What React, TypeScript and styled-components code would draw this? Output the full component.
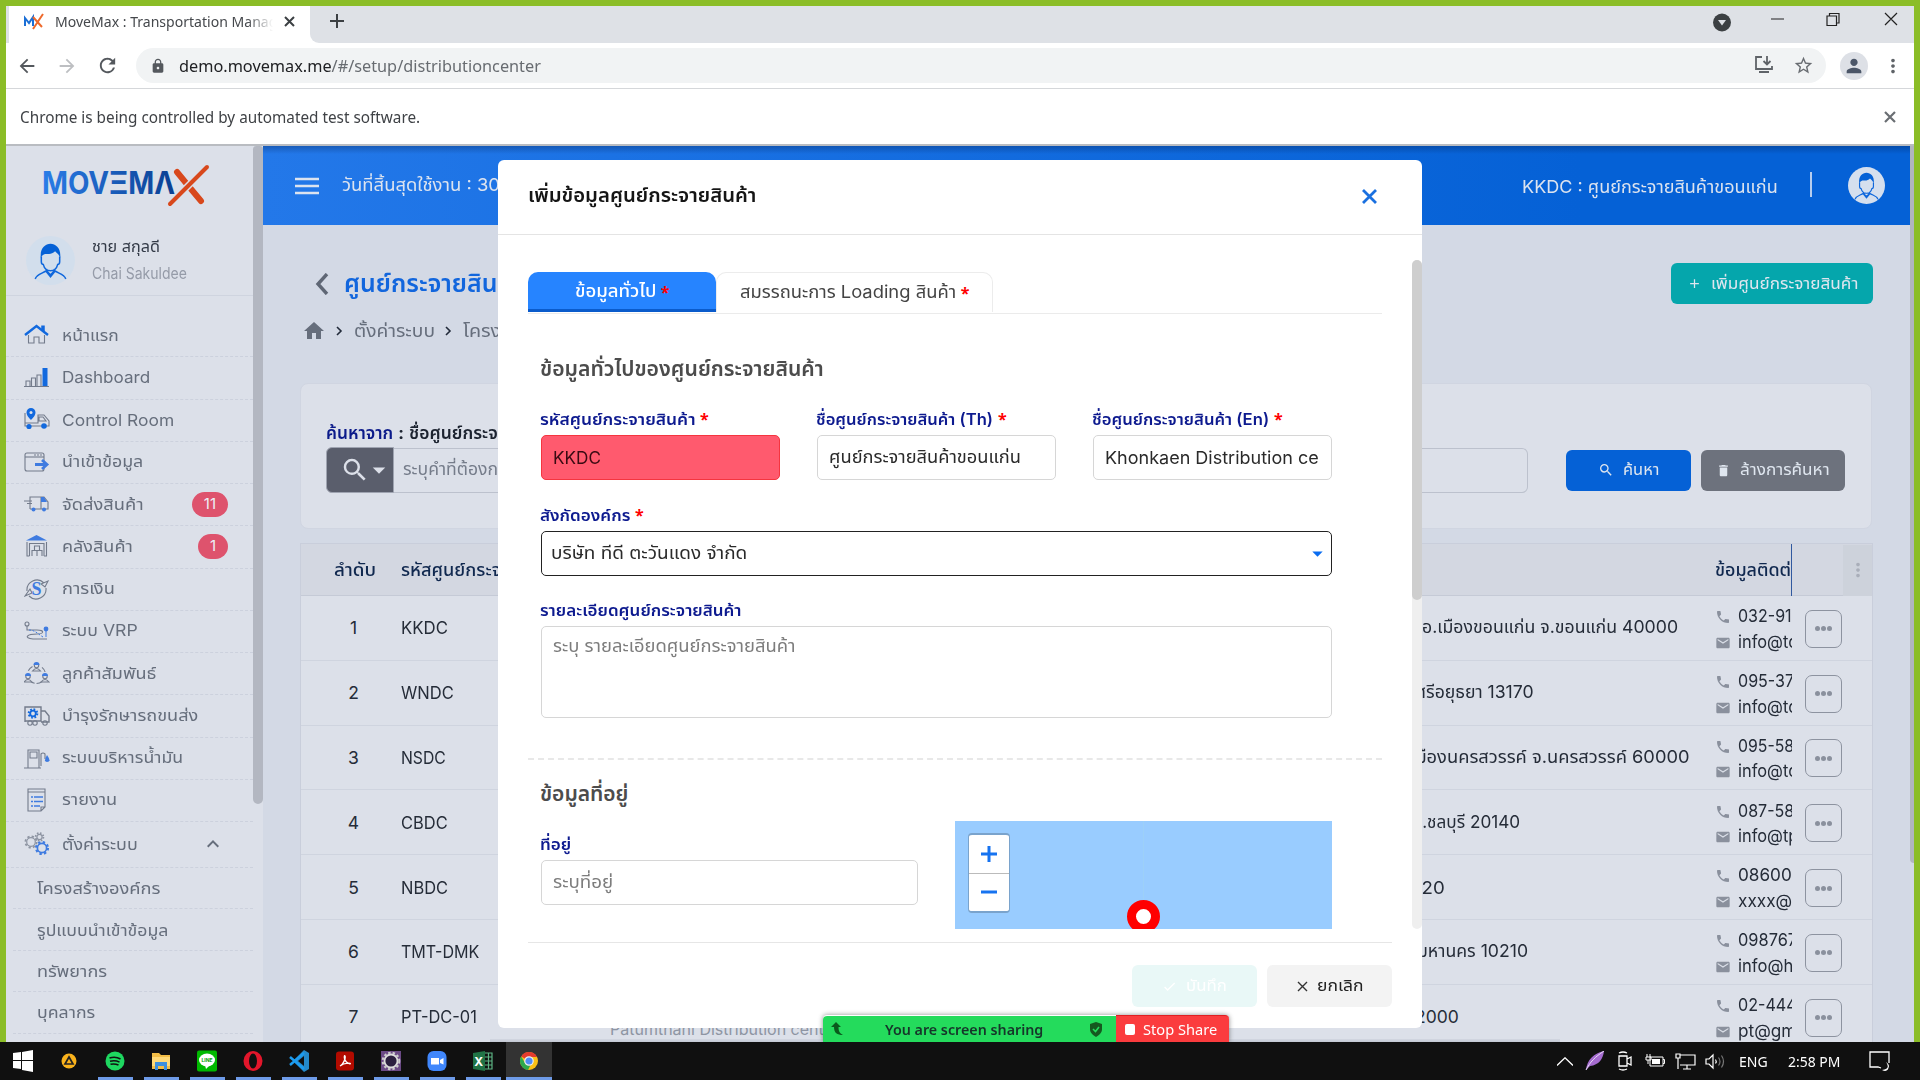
import React, { useLayoutEffect, useRef, useState } from 'react';
import styled, { createGlobalStyle, css } from 'styled-components';
import { MdSearch, MdHome, MdPhone, MdEmail, MdDelete, MdStarBorder, MdPerson, MdMoreVert, MdLock, MdRefresh, MdArrowBack, MdArrowForward, MdAdd, MdCheck, MdKeyboardArrowUp, MdArrowDropDown } from 'react-icons/md';

const thai = `Inter, "Noto Sans Thai", "Noto Sans", sans-serif`;
const ui = `"Noto Sans", "Open Sans", sans-serif`;

const Global = createGlobalStyle`
  * { box-sizing: border-box; }
  body { margin: 0; overflow: hidden; font-family: ${thai}; color: #222b3a; }
  svg { display: block; flex: none; }
`;

/* ---------- text that keeps a fixed measure ---------- */
const FitBox = styled.span`
  display: inline-block;
  white-space: nowrap;
  flex: none;
`;
const FitText = styled.span`
  display: inline-block;
  transform-origin: 0 50%;
`;
function Fit({ w, children }: { w: number; children: React.ReactNode }) {
  const ref = useRef<HTMLSpanElement>(null);
  const [scale, setScale] = useState(1);
  useLayoutEffect(() => {
    if (ref.current) setScale(w / ref.current.offsetWidth);
  }, [w]);
  return (
    <FitBox style={{ width: w }}>
      <FitText ref={ref} style={{ transform: `scaleX(${scale})` }}>{children}</FitText>
    </FitBox>
  );
}

/* ---------- window chrome ---------- */
const Desktop = styled.div`
  width: 1920px;
  height: 1080px;
  display: flex;
  flex-direction: column;
  overflow: hidden;
`;
const Window = styled.div`
  position: relative;
  height: 1042px;
  flex: none;
  display: flex;
  flex-direction: column;
  overflow: hidden;
  border: 6px solid #8bbd27;
  border-bottom: 0;
`;
const TabStrip = styled.div`
  display: flex;
  height: 37px;
  flex: none;
  background: #dee1e6;
  font: 15px ${ui};
  color: #45484c;
`;
const StripEdge = styled.div`
  width: 3px;
  background: #dee1e6;
`;
const BrowserTab = styled.div`
  display: flex;
  align-items: center;
  width: 301px;
  padding: 0 12px 7px 15px;
  background: #fff;
`;
const TabTitle = styled.div`
  width: 218px;
  margin: 0 11px 0 11px;
  overflow: hidden;
  -webkit-mask-image: linear-gradient(90deg, #000 88%, transparent);
`;
const StripRest = styled.div`
  flex: 1;
  display: flex;
  align-items: center;
  padding: 0 15px 7px 19px;
  background: #dee1e6;
  border-bottom-left-radius: 9px;
`;
const StripWrap = styled.div`
  flex: 1;
  display: flex;
  background: #fff;
`;
const WindowButtons = styled.div`
  margin-left: auto;
  display: flex;
  align-items: center;
`;
const Toolbar = styled.div`
  display: flex;
  align-items: center;
  height: 46px;
  flex: none;
  padding: 0 9px 0 10px;
  background: #fff;
  border-bottom: 1px solid #d5d7da;
  color: #5f6368;
`;
const NavIcon = styled.div<{ $dim?: boolean; $w?: number }>`
  width: ${(p) => p.$w ?? 40}px;
  display: flex;
  flex: none;
  color: ${(p) => (p.$dim ? '#bdbfc2' : '#54585d')};
`;
const UrlPill = styled.div`
  flex: none;
  width: 1690px;
  height: 35px;
  margin-right: 14px;
  border-radius: 18px;
  background: #f1f3f4;
  display: flex;
  align-items: center;
  padding: 0 12px 0 14px;
  font: 17px ${ui};
  color: #686c71;
  b { font-weight: 400; color: #202124; }
`;
const PillActions = styled.div`
  margin-left: auto;
  display: flex;
  gap: 19px;
`;
const Profile = styled.div`
  width: 28px;
  height: 28px;
  margin-right: 14px;
  border-radius: 50%;
  background: #dde0e6;
  color: #4b5668;
  display: grid;
  place-items: center;
`;
const InfoBar = styled.div`
  display: flex;
  align-items: center;
  justify-content: space-between;
  height: 57px;
  flex: none;
  padding: 0 18px 0 14px;
  background: #fff;
  border-bottom: 2px solid #b9bcc1;
  font: 15.5px ${ui};
  color: #3f4246;
`;

/* ---------- application ---------- */
const AppArea = styled.div`
  flex: 1;
  display: flex;
  min-height: 0;
  background: #d3d9e5;
`;
const Sidebar = styled.div`
  width: 257px;
  display: flex;
  background: #dce0e9;
  color: #666e7c;
  font-size: 16.5px;
`;
const SideContent = styled.div`
  width: 247px;
`;
const SideScroll = styled.div`
  width: 10px;
  height: 658px;
  background: #b3b7c1;
  border-radius: 4px 4px 6px 6px;
`;
const LogoBox = styled.div`
  height: 78px;
  padding: 17px 0 0 36px;
`;
const UserBox = styled.div`
  display: flex;
  align-items: center;
  height: 72px;
  padding: 1px 0 0 20px;
  border-bottom: 1px solid #cfd4df;
`;
const UserNames = styled.div`
  display: grid;
  margin-left: 17px;
  gap: 3px;
  font-size: 15.5px;
  line-height: 24px;
  color: #343b48;
`;
const Muted = styled.span`
  color: #959ba8;
`;
const Menu = styled.div`
  padding-top: 19px;
`;
const MenuItem = styled.div<{ $h: number }>`
  display: flex;
  align-items: center;
  height: ${(p) => p.$h}px;
  padding: 0 25px 1px 18px;
  border-bottom: 1px dashed #ccd1dd;
`;
const MenuIcon = styled.div`
  width: 38px;
`;
const Badge = styled.span`
  margin-left: auto;
  padding: 0 12px;
  height: 25px;
  line-height: 24px;
  border-radius: 13px;
  background: #de536d;
  color: #eceff6;
  font-size: 15px;
`;
const MenuChevron = styled.div`
  margin-left: auto;
  padding-right: 3px;
`;
const SubItem = styled.div`
  height: 41.4px;
  margin-left: 7px;
  padding: 1px 0 0 24px;
  display: flex;
  align-items: center;
  border-bottom: 1px dashed #ccd1dd;
`;
const Main = styled.div`
  width: 1647px;
  display: flex;
  flex-direction: column;
`;
const PageScroll = styled.div`
  width: 4px;
  height: 717px;
  background: #b1b5c0;
  border-radius: 0 0 0 4px;
`;
const TopBar = styled.div`
  display: flex;
  align-items: center;
  height: 79px;
  flex: none;
  padding: 0 25px 0 32px;
  background: linear-gradient(180deg, rgba(0, 20, 60, .28), transparent 8px), linear-gradient(90deg, #2378e9, #0561d6 80%);
  color: #dce3ef;
  font-size: 17.5px;
`;
const TopLabel = styled.div`
  margin-left: 23px;
`;
const TopRight = styled.div`
  display: flex;
  align-items: center;
  margin-left: auto;
`;
const CenterName = styled.div`
  padding-top: 4px;
`;
const TopRule = styled.div`
  width: 2px;
  height: 25px;
  margin: 0 36px 2px 32px;
  background: #b6cdee;
`;
const PageHead = styled.div`
  display: flex;
  flex: none;
  justify-content: space-between;
  height: 158px;
  padding: 38px 37px 0 39px;
`;
const TitleRow = styled.div`
  display: flex;
  align-items: center;
  height: 42px;
  gap: 15px;
  padding-left: 13px;
  color: #1266dd;
  font-size: 25px;
  font-weight: 600;
`;
const Crumbs = styled.div`
  display: flex;
  align-items: center;
  height: 52px;
  font-size: 17.5px;
  color: #666e7c;
`;
const CrumbArrow = styled.div`
  width: 7px;
  margin: 0 11px 0 10px;
`;
const Button = styled.div<{ $bg: string; $fg?: string; $w: number; $h?: number }>`
  display: flex;
  align-items: center;
  justify-content: center;
  gap: 9px;
  width: ${(p) => p.$w}px;
  height: ${(p) => p.$h ?? 41}px;
  border-radius: 6px;
  background: ${(p) => p.$bg};
  color: ${(p) => p.$fg ?? '#dfe6ef'};
  font-size: 16px;
`;
const SearchCard = styled.div`
  flex: none;
  height: 146px;
  margin: 0 38px 0 37px;
  padding: 35px 26px 0 25px;
  background: #dce0e9;
  border: 1px solid #d0d5e1;
  border-radius: 8px;
`;
const SearchLabel = styled.div`
  display: flex;
  height: 28px;
  line-height: 28px;
  font-size: 17px;
  font-weight: 600;
  color: #1c2330;
  b { color: #0b1a8a; font-weight: 600; }
`;
const SearchRow = styled.div`
  display: flex;
  align-items: center;
`;
const SearchKind = styled.div`
  width: 68px;
  height: 46px;
  display: flex;
  align-items: center;
  padding-left: 13px;
  background: #5a5e6c;
  border: 1px solid #9fa4b1;
  border-radius: 6px 0 0 6px;
  color: #dce0e9;
  svg + svg { margin-left: -6px; }
`;
const SearchInput = styled.div`
  width: 1135px;
  height: 45px;
  margin-right: 38px;
  padding-left: 9px;
  display: flex;
  align-items: center;
  border: 1px solid #bcc1cd;
  border-left: 0;
  border-radius: 0 6px 6px 0;
  color: #757c8a;
  font-size: 17px;
`;
const ClearSlot = styled.div`
  margin-left: 10px;
`;
const Table = styled.div`
  flex: none;
  height: 520px;
  margin: 14px 37px 0 37px;
  border: 1px solid #c9cedb;
  background: #dce0e9;
`;
const rowGrid = css`
  display: grid;
  grid-template-columns: 100px 1021px 293px 77px 80px;
`;
const HeadRow = styled.div`
  ${rowGrid}
  height: 52px;
  align-items: center;
  background: #d3d7e1;
  border-bottom: 1px solid #c5cad6;
  color: #10284f;
  font-size: 17.5px;
  font-weight: 500;
`;
const Row = styled.div`
  ${rowGrid}
  height: 64.8px;
  align-items: center;
  border-bottom: 1px solid #cfd4df;
  font-size: 17.5px;
  color: #252c38;
`;
const NumCell = styled.div`
  text-align: center;
  padding-left: 5px;
`;
const Cell = styled.div`
  display: flex;
  gap: 209px;
  white-space: nowrap;
`;
const SubNameSlot = styled.div`
  margin-left: -76px;
`;
const SubName = styled.div`
  width: 0;
  height: 0;
  padding-top: 13px;
  color: #8e95a3;
  font-size: 16px;
`;
const Address = styled.div<{ $pull: number }>`
  margin-left: -${(p) => p.$pull}px;
`;
const Contact = styled.div`
  overflow: hidden;
  align-self: stretch;
  padding-top: 7px;
`;
const ContactLine = styled.div`
  display: flex;
  align-items: center;
  gap: 7px;
  height: 25.5px;
  color: #252c38;
  svg { color: #8a909d; margin-top: 3px; }
`;
const HeadContact = styled.div`
  height: 52px;
  line-height: 52px;
  overflow: hidden;
  border-right: 1px solid #31599f;
`;
const HeadMenu = styled.div`
  width: 29px;
  height: 51px;
  margin-left: auto;
  display: grid;
  place-items: center;
  background: #cdd2db;
  color: #a9aeb9;
`;
const MoreButton = styled.div`
  width: 37px;
  height: 38px;
  margin: 2px 0 0 13px;
  border: 1px solid #8d93a0;
  border-radius: 7px;
  display: flex;
  align-items: center;
  justify-content: center;
  gap: 1px;
  i { width: 5px; height: 5px; border-radius: 50%; background: #8a909d; }
`;

/* ---------- modal ---------- */
const Modal = styled.div`
  position: absolute;
  left: 492px;
  top: 154px;
  width: 924px;
  height: 868px;
  border-radius: 6px;
  background: #fff;
  color: #222;
`;
const ModalHead = styled.div`
  display: flex;
  align-items: center;
  justify-content: space-between;
  height: 75px;
  padding: 0 45px 2px 30px;
  border-bottom: 1px solid #e4e4e4;
  font-size: 20px;
  font-weight: 600;
  color: #151515;
`;
const ModalBody = styled.div`
  display: flex;
  justify-content: space-between;
  height: 694px;
  padding-top: 25px;
  overflow: hidden;
`;
const Form = styled.div`
  width: 854px;
  margin-left: 30px;
  padding-top: 12px;
`;
const ModalScroll = styled.div`
  width: 10px;
  height: 669px;
  background: #efefef;
  border-radius: 5px;
`;
const ModalThumb = styled.div`
  height: 340px;
  background: #cecece;
  border-radius: 5px;
`;
const Tabs = styled.div`
  display: flex;
  height: 42px;
  border-bottom: 1px solid #ebebeb;
`;
const FormTab = styled.div<{ $active?: boolean }>`
  display: flex;
  align-items: center;
  justify-content: center;
  height: 40px;
  width: ${(p) => (p.$active ? 188 : 277)}px;
  border-radius: 10px 10px 0 0;
  font-size: 17px;
  ${(p) =>
    p.$active
      ? css`padding-top: 3px; background: #2684ff; color: #fff; border-bottom: 3px solid #0a5bcb; font-weight: 500;`
      : css`border: 1px solid #ececec; border-bottom: 0; color: #444;`}
`;
const Star = styled.span`
  margin-left: 5px;
  color: #f00;
  font-size: 16px;
  font-weight: 700;
  font-family: ${ui};
`;
const Section = styled.div<{ $top: number }>`
  display: flex;
  align-items: center;
  height: 32px;
  margin: ${(p) => p.$top}px 0 0 12px;
  font-size: 21px;
  font-weight: 600;
  color: #4c4c4c;
`;
const Fields = styled.div<{ $top: number }>`
  display: flex;
  gap: 37px;
  margin: ${(p) => p.$top}px 0 0 13px;
`;
const Field = styled.div<{ $w: number }>`
  width: ${(p) => p.$w}px;
`;
const Label = styled.div`
  display: flex;
  align-items: center;
  height: 30px;
  margin: 0 0 1px -1px;
  font-size: 16.5px;
  font-weight: 600;
  color: #0d1a8f;
`;
const Input = styled.div<{ $bad?: boolean; $focus?: boolean; $tall?: boolean }>`
  display: flex;
  align-items: ${(p) => (p.$tall ? 'flex-start' : 'center')};
  justify-content: space-between;
  height: ${(p) => (p.$tall ? 92 : 45)}px;
  padding: ${(p) => (p.$tall ? '6px 0 0 11px' : p.$focus ? '0 1px 0 9px' : '0 0 0 11px')};
  border: 1px solid ${(p) => (p.$bad ? '#f5353f' : p.$focus ? '#222' : '#d6d6d6')};
  border-radius: 5px;
  background: ${(p) => (p.$bad ? '#ff5a6e' : '#fff')};
  font-size: 17.5px;
  color: ${(p) => (p.$bad ? '#3a0a12' : '#2a2a2a')};
`;
const Hint = styled.span`
  color: #7d7d7d;
`;
const Divider = styled.div`
  margin-top: 40px;
  border-top: 2px dashed #e8e8e8;
`;
const MapView = styled.div`
  position: relative;
  flex: none;
  width: 377px;
  height: 190px;
  margin-top: -8px;
  background: linear-gradient(90deg, transparent 188px, #9dd0f8 188px, #9dd0f8 189px, transparent 189px), #99ccff;
`;
const ZoomBox = styled.div`
  position: absolute;
  left: 13px;
  top: 12px;
  width: 42px;
  height: 80px;
  display: flex;
  flex-direction: column;
  border: 2px solid #7aa3cc;
  border-width: 2px 1.5px;
  border-radius: 4px;
  background: #fff;
`;
const ZoomKey = styled.div`
  flex: 1;
  display: grid;
  place-items: center;
  & + & { border-top: 1px solid #bbb; }
`;
const Marker = styled.div`
  position: absolute;
  left: 172px;
  top: 79px;
  width: 33px;
  height: 33px;
  border: 9px solid #f00;
  border-radius: 50%;
  background: #fff;
`;
const ModalFoot = styled.div`
  display: flex;
  justify-content: flex-end;
  gap: 10px;
  margin: 13px 30px 0;
  padding-top: 22px;
  border-top: 1px solid #e6e6e6;
`;
const TableScroll = styled.div`
  position: absolute;
  left: 484px;
  bottom: 0;
  width: 1070px;
  height: 3px;
  background: linear-gradient(180deg, #d3d7e1, #c3c8d3);
`;

/* ---------- screen share ---------- */
const Share = styled.div`
  position: absolute;
  left: 817px;
  bottom: 0;
  display: flex;
  align-items: flex-end;
  font: 600 15px ${ui};
  color: #16352a;
  box-shadow: 0 0 5px rgba(0, 0, 0, .45);
  border-radius: 4px 4px 0 0;
`;
const ShareInfo = styled.div`
  display: flex;
  align-items: center;
  width: 293px;
  height: 26px;
  padding-left: 7px;
  background: #24db5c;
  border-radius: 4px 0 0 0;
`;
const ShareText = styled.div`
  margin: 0 46px 0 41px;
`;
const StopShare = styled.div`
  display: flex;
  align-items: center;
  gap: 8px;
  width: 113px;
  height: 27px;
  padding-left: 9px;
  background: #fb3c3e;
  border-top: 1px solid #e01f22;
  border-radius: 0 4px 0 0;
  color: #fff;
  font-weight: 400;
  i { width: 10px; height: 11px; border-radius: 2px; background: #fff; }
`;

/* ---------- taskbar ---------- */
const Taskbar = styled.div`
  display: flex;
  height: 38px;
  background: #101010;
  color: #fff;
  font: 15px ${ui};
`;
const TaskApp = styled.div<{ $open?: boolean; $active?: boolean; $w: number }>`
  width: ${(p) => p.$w}px;
  display: grid;
  place-items: center;
  background: ${(p) =>
    p.$open
      ? `linear-gradient(#6e9be8,#6e9be8) center bottom / ${p.$active ? 46 : 35}px 3px no-repeat ${p.$active ? '#333' : '#101010'}`
      : 'transparent'};
`;
const Tray = styled.div`
  margin-left: auto;
  display: flex;
  align-items: center;
  padding-right: 14px;
`;
const TrayItem = styled.div<{ $w: number }>`
  width: ${(p) => p.$w}px;
  display: flex;
  justify-content: center;
`;

/* ---------- drawings ---------- */
const g = { fill: 'none', stroke: '#737b8b', strokeWidth: 1.1 } as const;
const B = '#1269de';
const L = '#3f7be0';
const Gear = ({ x, y, r, c, w = 1.2 }: { x: number; y: number; r: number; c: string; w?: number }) => (
  <g fill="none" stroke={c} strokeWidth={w}>
    <circle cx={x} cy={y} r={r} />
    <circle cx={x} cy={y} r={r + 1.3} strokeWidth={w + 0.6} strokeDasharray={`${(r + 1.3) * 0.4} ${(r + 1.3) * 0.385}`} />
  </g>
);
const icons: Record<string, React.ReactNode> = {
  home: <><path {...g} d="M4.500 12v8h5.500v-6h5v6h5.500v-8" /><path d="M1 12 12.500 3 24 12" fill="none" stroke={B} strokeWidth="2.400" /><path d="M19 8V2.500" fill="none" stroke={B} strokeWidth="3.500" /></>,
  bars: <><path {...g} d="M0 21.500h25M2 21v-5h4v5M7.500 21v-8h4v8M13 21V10h4v11" /><path fill={B} d="M18.500 3h5v18h-5z" /></>,
  control: <><path {...g} d="M1 5v13h24v-5l-5-6h-6v8H1M15 9h4l3 4h-7z" /><path fill={B} d="M7 0a4.500 4.500 0 0 1 4.500 4.500C11.500 8 7 12 7 12S2.500 8 2.500 4.500A4.500 4.500 0 0 1 7 0z" /><circle cx="7" cy="4.500" r="1.500" fill="#dce0e9" /><circle cx="5" cy="18.500" r="2.600" fill={B} /><circle cx="20" cy="18" r="2.800" fill={B} /></>,
  import: <><rect {...g} x="1" y="3" width="19" height="18" rx="2" /><path {...g} d="M1 7h19" /><path {...g} strokeDasharray="2 1" d="M10 5h9" /><path d="M11 14.500h11M18 10l5 4.500-5 4.500" fill="none" stroke={L} strokeWidth="2.800" /></>,
  deliver: <><path {...g} d="M6 17V5h11v12M0 9h8M3 11.500h5M17 5h3l4 5v7H6" /><path d="M17 5h3l3 5h-6z" fill={L} /><circle cx="9.500" cy="17.500" r="2" fill={L} /><circle cx="20" cy="17.500" r="2" fill={L} /></>,
  store: <><path {...g} d="M3 8v14M5.500 9v13M20 9v13M22.500 8v14M5.500 9.500h15M8 22v-5.500h10V22M13 16.500V22M10.500 12v4.500h5V12zM2.500 22h3M20 22h3" /><path fill={L} d="M12.500 1 23 6.500H2z" /></>,
  money: <><path {...g} d="M3 14A10 10 0 0 1 20 6M22 11A10 10 0 0 1 5 19M17 7l7-3-3 6zM1 19l7-3-2-4z" /><text x="12.500" y="17.500" textAnchor="middle" fontFamily="Liberation Serif" fontWeight="700" fontSize="18" fill={L}>S</text></>,
  route: <><circle {...g} cx="3" cy="5" r="2" /><path {...g} d="M3 7v4h10c8 0 7 4 0 4-10 0-14 4-4 5h14" /><path d="M5 11c6 0 9 4 14 7" fill="none" stroke={L} strokeDasharray="2 1.500" /><circle cx="22" cy="10" r="2.400" fill={L} /><path d="M22 12v6" stroke={L} /></>,
  people: <><circle {...g} cx="12.500" cy="13.500" r="9" strokeDasharray="6 2" /><g fill="#dce0e9"><path d="M9 0h8v9H9zM0 11h8v10H0zM17 11h8v10h-8z" /></g><path {...g} d="M8.500 10q4-5 8 0zM0 21q4-5 8 0zM17 21q4-5 8 0z" /><g {...g}><circle cx="12.500" cy="4.500" r="2.200" /><circle cx="4" cy="15.500" r="2.200" /><circle cx="21" cy="15.500" r="2.200" /></g><g fill={L}><path d="M9.500 4a3 3 0 0 1 6 0zM1 15a3 3 0 0 1 6 0zM18 15a3 3 0 0 1 6 0z" /></g></>,
  service: <><path {...g} strokeWidth="1.400" d="M1 19V4h16v14H1M17 8h4l4 5v6h-8" /><circle {...g} cx="6" cy="20" r="2.200" /><circle {...g} cx="11" cy="20" r="2.200" /><circle {...g} cx="21" cy="20" r="2.200" /><Gear x={9} y={10.500} r={2.800} c={B} w={1.800} /></>,
  fuel: <><path {...g} d="M4 22V4h11v18M0 22h17M6 6h7v6H6zM17 20V8q2-2 4 0v5" /><path fill={L} d="M23 9q5 7 0 7-4 0 0-7z" /></>,
  report: <><path {...g} d="M4 1h17v18l-4 4H4zM4 4h17M17 23v-4h4" /><path d="M7 9h2M10 9h9M7 13.500h2M10 13.500h9M7 18h2M10 18h6" stroke={L} strokeWidth="1.700" /></>,
  gears: <><Gear x={7} y={10} r={4.300} c="#8d94a2" /><Gear x={15.500} y={5} r={2.600} c="#8d94a2" /><Gear x={18} y={16} r={4.600} c={L} w={1.700} /></>,
};
const Person = ({ size, bg }: { size: number; bg: string }) => (
  <svg width={size} height={size} viewBox="0 0 48 48">
    <circle cx="24" cy="24" r="24" fill={bg} />
    <path d="M15 20v5c0 3 2 3 2 3 2 8 12 8 14 0 0 0 2 0 2-3v-5M9 42c2-5 7-5 11-8l4 4 4-4c4 3 9 3 11 8M20 32v3l4 5 4-5v-3" fill="none" stroke="#0f67dc" strokeWidth="1.500" />
    <path d="M14.500 21c-2-18 21-18 19 0-1.500-3-3-4-5-6-4 4-8 2-11 3-2 1-2 2-3 3z" fill="#0561d6" />
  </svg>
);
const Cross = ({ s, c, w }: { s: number; c: string; w: number }) => (
  <svg width={s} height={s} viewBox={`0 0 ${s} ${s}`}><path d={`M1 1 ${s - 1} ${s - 1}M${s - 1} 1 1 ${s - 1}`} stroke={c} strokeWidth={w} fill="none" /></svg>
);
const Logo = () => (
  <svg width="172" height="46" viewBox="0 0 172 46">
    <defs><linearGradient id="lg" gradientUnits="userSpaceOnUse" x1="0" x2="134"><stop offset="0" stopColor="#2a7de8" /><stop offset="1" stopColor="#0a3f91" /></linearGradient></defs>
    <text x="0" y="31" fontFamily="Inter" fontWeight="700" fontSize="31" fill="url(#lg)" textLength="133" lengthAdjust="spacingAndGlyphs">MOVΞMΛ</text>
    <path d="M135 9l9 11 15 18" stroke="#d8481c" strokeWidth="6" strokeLinecap="round" fill="none" />
    <path d="M165 4 128 41" stroke="#dce0e9" strokeWidth="7" />
    <path d="M165 4 128 41" stroke="#d8481c" strokeWidth="4" strokeLinecap="round" />
  </svg>
);
const CrumbMark = () => (
  <CrumbArrow><svg width="7" height="10" viewBox="0 0 7 10"><path d="M1 1l4 4-4 4" fill="none" stroke="#222b3a" strokeWidth="1.600" /></svg></CrumbArrow>
);
const apps: { open?: boolean; active?: boolean; art: React.ReactNode }[] = [
  { art: <path fill="#fff" d="M2 4l8-1v8H2zM11 3l11-2v10H11zM2 12h8v8l-8-1zM11 12h11v11l-11-2z" /> },
  { art: <><circle cx="12" cy="12" r="7.500" fill="#f9b21c" /><path d="M12 8l4 7H8z" fill="none" stroke="#222" strokeWidth="1.700" /></> },
  { open: true, art: <><circle cx="12" cy="12" r="9.500" fill="#1ed760" /><path d="M6.500 9q6-2 11 1M7 12.300q5-1.500 9.500.8M7.500 15.300q4-1 8 .7" stroke="#111" strokeWidth="1.600" fill="none" /></> },
  { open: true, art: <><path fill="#f3bd46" d="M3 4h7l2 2h9v14H3z" /><path fill="#ffd978" d="M3 8h18v9H3z" /><path fill="#3d8fde" d="M6 21v-8h12v8h-3v-4H9v4z" /></> },
  { open: true, art: <><rect x="2" y="1.500" width="20" height="21" rx="2" fill="#00b900" /><ellipse cx="12" cy="11" rx="8" ry="6.500" fill="#fff" /><path fill="#fff" d="M10 16h5l-4 4z" /><text x="12" y="13" fontSize="5" fontWeight="700" textAnchor="middle" fill="#00a000" fontFamily="Inter">LINE</text></> },
  { open: true, art: <><ellipse cx="12" cy="12" rx="9.500" ry="10" fill="#e3162b" /><ellipse cx="12" cy="12" rx="4" ry="7.500" fill="#101010" /></> },
  { open: true, art: <><path fill="#2489ca" d="M17 1l5 3v16l-5 3L6 12z" /><path fill="#101010" d="M17 7v10l-6-5z" /><path d="M3 8l14 12M3 16 17 4" stroke="#1c9cf0" strokeWidth="2.500" /></> },
  { open: true, art: <><rect x="3" y="2.500" width="18" height="19" rx="3" fill="#b30b00" /><path d="M7 17c3-1 6-8 5-10s-2 6 5 8c2-1-5-2-10 2" fill="none" stroke="#fff" strokeWidth="1.300" /></> },
  { open: true, art: <><rect x="2" y="2" width="20" height="20" fill="#6b4a86" /><circle cx="12" cy="12" r="6.500" fill="#2c2040" stroke="#ddd" strokeWidth="1.800" /><circle cx="12" cy="12" r="8.300" fill="none" stroke="#ccc" strokeWidth="2" strokeDasharray="2.500 2" /></> },
  { open: true, art: <><rect x="2.500" y="2" width="19" height="20" rx="6" fill="#4087fc" /><path fill="#fff" d="M6 9h8v6.500H6zM15 11l3.500-2v6.500L15 14z" /></> },
  { open: true, art: <><path fill="#217346" d="M2 4l12-2v20L2 20z" /><path d="M14 4h7v16h-7M14 8h7M14 12h7M14 16h7M17.500 4v16" stroke="#5db383" strokeWidth="1.200" fill="none" /><text x="7.800" y="16.500" fontSize="12" fontWeight="700" textAnchor="middle" fill="#fff" fontFamily="Inter">X</text></> },
  { open: true, active: true, art: <><circle cx="12" cy="12" r="9" fill="#fbc116" /><path fill="#e33b2e" d="M12 12 4.200 7.500A9 9 0 0 1 20 8h-8z" /><path fill="#2da94f" d="M12 12l2 3-3 6A9 9 0 0 1 4.200 7.500L8 14z" /><circle cx="12" cy="12" r="4.200" fill="#4f8df5" stroke="#eee" strokeWidth="1.200" /></> },
];

const menu: { k: string; t: string; w: number; h?: number; badge?: string }[] = [
  { k: 'home', t: 'หน้าแรก', w: 57 },
  { k: 'bars', t: 'Dashboard', w: 88 },
  { k: 'control', t: 'Control Room', w: 112 },
  { k: 'import', t: 'นำเข้าข้อมูล', w: 81 },
  { k: 'deliver', t: 'จัดส่งสินค้า', w: 82, badge: '11' },
  { k: 'store', t: 'คลังสินค้า', w: 71, badge: '1' },
  { k: 'money', t: 'การเงิน', w: 53 },
  { k: 'route', t: 'ระบบ VRP', w: 76 },
  { k: 'people', t: 'ลูกค้าสัมพันธ์', w: 94 },
  { k: 'service', t: 'บำรุงรักษารถขนส่ง', w: 136 },
  { k: 'fuel', t: 'ระบบบริหารน้ำมัน', w: 121 },
  { k: 'report', t: 'รายงาน', w: 55 },
  { k: 'gears', t: 'ตั้งค่าระบบ', w: 76, h: 46 },
];
const subs: [string, number][] = [['โครงสร้างองค์กร', 123], ['รูปแบบนำเข้าข้อมูล', 131], ['ทรัพยากร', 70], ['บุคลากร', 58]];
const rows: { c: string; cw: number; a: string; aw: number; pull: number; p: string; pw: number; m: string; mw: number }[] = [
  { c: 'KKDC', cw: 47, a: 'อ.เมืองขอนแก่น จ.ขอนแก่น 40000', aw: 256, pull: 0, p: '032-91', pw: 54, m: 'info@td', mw: 60 },
  { c: 'WNDC', cw: 53, a: 'ศรีอยุธยา 13170', aw: 119, pull: 7, p: '095-37', pw: 56, m: 'info@td', mw: 60 },
  { c: 'NSDC', cw: 45, a: 'เมืองนครสวรรค์ จ.นครสวรรค์ 60000', aw: 279, pull: 12, p: '095-58', pw: 56, m: 'info@td', mw: 60 },
  { c: 'CBDC', cw: 47, a: 'จ.ชลบุรี 20140', aw: 107, pull: 9, p: '087-58', pw: 56, m: 'info@tp', mw: 60 },
  { c: 'NBDC', cw: 47, a: '120', aw: 31, pull: 8, p: '08600', pw: 54, m: 'xxxx@', mw: 54 },
  { c: 'TMT-DMK', cw: 78, a: 'มหานคร 10210', aw: 111, pull: 5, p: '098767', pw: 59, m: 'info@h', mw: 55 },
  { c: 'PT-DC-01', cw: 76, a: '12000', aw: 51, pull: 14, p: '02-444', pw: 59, m: 'pt@gm', mw: 58 },
];

export default function App() {
  return (
    <Desktop>
      <Global />
      <Window>
        <TabStrip>
          <StripEdge />
          <BrowserTab>
            <svg width="20" height="17" viewBox="0 0 20 17"><path d="M1 13V5l4 5 4-6v9" stroke="#1b6fd6" strokeWidth="2" fill="none" /><path d="M9 4l9 10M19 1 9 16" stroke="#ee6a2c" strokeWidth="2" /></svg>
            <TabTitle><Fit w={222}>MoveMax : Transportation Manag</Fit></TabTitle>
            <Cross s={11} c="#3c4043" w={2} />
          </BrowserTab>
          <StripWrap>
            <StripRest>
              <svg width="16" height="16" viewBox="0 0 16 16"><path d="M8 1v14M1 8h14" stroke="#3c4043" strokeWidth="2" /></svg>
              <WindowButtons>
                <svg width="190" height="24" viewBox="0 0 190 24">
                  <circle cx="13" cy="13.500" r="9" fill="#3c4043" /><path d="M9 11h8l-4 5.500z" fill="#dee1e6" />
                  <g fill="none" stroke="#222" strokeWidth="1.200"><path d="M62 10h13M118 7h9.500v9.500H118zM120.500 6.500V4.500H130V14h-2M176 4l12 12M188 4l-12 12" /></g>
                </svg>
              </WindowButtons>
            </StripRest>
          </StripWrap>
        </TabStrip>
        <Toolbar>
          <NavIcon><MdArrowBack size={22} /></NavIcon>
          <NavIcon $dim><MdArrowForward size={22} /></NavIcon>
          <NavIcon><MdRefresh size={23} /></NavIcon>
          <UrlPill>
            <NavIcon $w={29}><MdLock size={16} /></NavIcon>
            <Fit w={362}><b>demo.movemax.me</b>/#/setup/distributioncenter</Fit>
            <PillActions>
              <svg width="20" height="20" viewBox="0 0 20 20"><path d="M8 2H2v12h16v-3" fill="none" stroke="#5f6368" strokeWidth="1.800" /><path d="M5 16h10v2H5z" fill="#5f6368" /><path d="M13 1v8M9.500 6l3.500 3.500L16.500 6" fill="none" stroke="#5f6368" strokeWidth="1.800" /></svg>
              <MdStarBorder size={21} />
            </PillActions>
          </UrlPill>
          <Profile><MdPerson size={22} /></Profile>
          <MdMoreVert size={22} />
        </Toolbar>
        <InfoBar>
          <Fit w={400}>Chrome is being controlled by automated test software.</Fit>
          <Cross s={12} c="#6a6e73" w={2.200} />
        </InfoBar>
        <AppArea>
          <Sidebar>
            <SideContent>
              <LogoBox><Logo /></LogoBox>
              <UserBox>
                <Person size={49} bg="#d2deec" />
                <UserNames>
                  <Fit w={68}>ชาย สกุลดี</Fit>
                  <Muted><Fit w={95}>Chai Sakuldee</Fit></Muted>
                </UserNames>
              </UserBox>
              <Menu>
                {menu.map((m) => (
                  <MenuItem key={m.k} $h={m.h ?? 42.25}>
                    <MenuIcon><svg width="26" height="24" viewBox="0 0 26 24">{icons[m.k]}</svg></MenuIcon>
                    <Fit w={m.w}>{m.t}</Fit>
                    {m.badge && <Badge>{m.badge}</Badge>}
                    {m.k === 'gears' && <MenuChevron><MdKeyboardArrowUp size={24} /></MenuChevron>}
                  </MenuItem>
                ))}
                {subs.map(([t, w]) => <SubItem key={t}><Fit w={w}>{t}</Fit></SubItem>)}
              </Menu>
            </SideContent>
            <SideScroll />
          </Sidebar>
          <Main>
            <TopBar>
              <svg width="24" height="18" viewBox="0 0 24 18"><path d="M0 2h24M0 9h24M0 16h24" stroke="#dce3ef" strokeWidth="2.600" /></svg>
              <TopLabel><Fit w={158}>วันที่สิ้นสุดใช้งาน : 30</Fit></TopLabel>
              <TopRight>
                <CenterName><Fit w={256}>KKDC : ศูนย์กระจายสินค้าขอนแก่น</Fit></CenterName>
                <TopRule />
                <Person size={37} bg="#d5dfee" />
              </TopRight>
            </TopBar>
            <PageHead>
              <div>
                <TitleRow>
                  <svg width="14" height="22" viewBox="0 0 14 22"><path d="M12 1 3 11l9 10" fill="none" stroke="#5f6775" strokeWidth="3.400" /></svg>
                  <Fit w={180}>ศูนย์กระจายสินค้า</Fit>
                </TitleRow>
                <Crumbs>
                  <MdHome size={24} />
                  <CrumbMark />
                  <Fit w={81}>ตั้งค่าระบบ</Fit>
                  <CrumbMark />
                  <Fit w={133}>โครงสร้างองค์กร</Fit>
                </Crumbs>
              </div>
              <Button $bg="#05a6ac" $w={202}><MdAdd size={15} /><Fit w={147}>เพิ่มศูนย์กระจายสินค้า</Fit></Button>
            </PageHead>
            <SearchCard>
              <SearchLabel><b><Fit w={67}>ค้นหาจาก</Fit></b><Fit w={16}>&nbsp;:&nbsp;</Fit><Fit w={147}>ชื่อศูนย์กระจายสินค้า</Fit></SearchLabel>
              <SearchRow>
                <SearchKind><MdSearch size={30} /><MdArrowDropDown size={30} /></SearchKind>
                <SearchInput><Fit w={150}>ระบุคำที่ต้องการค้นหา</Fit></SearchInput>
                <Button $bg="#0561d6" $w={125}><MdSearch size={16} /><Fit w={37}>ค้นหา</Fit></Button>
                <ClearSlot><Button $bg="#6d727d" $w={144}><MdDelete size={15} /><Fit w={90}>ล้างการค้นหา</Fit></Button></ClearSlot>
              </SearchRow>
            </SearchCard>
            <Table>
              <HeadRow>
                <NumCell><Fit w={42}>ลำดับ</Fit></NumCell>
                <Cell><Fit w={160}>รหัสศูนย์กระจายสินค้า</Fit></Cell>
                <span />
                <HeadContact><Fit w={86}>ข้อมูลติดต่อ</Fit></HeadContact>
                <HeadMenu><MdMoreVert size={22} /></HeadMenu>
              </HeadRow>
              {rows.map((r, i) => (
                <Row key={r.c}>
                  <NumCell>{i + 1}</NumCell>
                  <Cell>
                    <Fit w={r.cw}>{r.c}</Fit>
                    {i === 6 && <SubNameSlot><SubName><Fit w={229}>Patumthani Distribution center</Fit></SubName></SubNameSlot>}
                  </Cell>
                  <Address $pull={r.pull}><Fit w={r.aw}>{r.a}</Fit></Address>
                  <Contact>
                    <ContactLine><MdPhone size={16} /><Fit w={r.pw}>{r.p}</Fit></ContactLine>
                    <ContactLine><MdEmail size={16} /><Fit w={r.mw}>{r.m}</Fit></ContactLine>
                  </Contact>
                  <MoreButton><i /><i /><i /></MoreButton>
                </Row>
              ))}
            </Table>
          </Main>
          <PageScroll />
        </AppArea>
        <TableScroll />
        <Modal>
          <ModalHead><Fit w={228}>เพิ่มข้อมูลศูนย์กระจายสินค้า</Fit><Cross s={15} c="#1a70e0" w={2.800} /></ModalHead>
          <ModalBody>
            <Form>
              <Tabs>
                <FormTab $active><Fit w={81}>ข้อมูลทั่วไป</Fit><Star>*</Star></FormTab>
                <FormTab><Fit w={216}>สมรรถนะการ Loading สินค้า</Fit><Star>*</Star></FormTab>
              </Tabs>
              <Section $top={39}><Fit w={284}>ข้อมูลทั่วไปของศูนย์กระจายสินค้า</Fit></Section>
              <Fields $top={19}>
                <Field $w={239}><Label><Fit w={155}>รหัสศูนย์กระจายสินค้า</Fit><Star>*</Star></Label><Input $bad><Fit w={48}>KKDC</Fit></Input></Field>
                <Field $w={239}><Label><Fit w={177}>ชื่อศูนย์กระจายสินค้า (Th)</Fit><Star>*</Star></Label><Input><Fit w={192}>ศูนย์กระจายสินค้าขอนแก่น</Fit></Input></Field>
                <Field $w={239}><Label><Fit w={177}>ชื่อศูนย์กระจายสินค้า (En)</Fit><Star>*</Star></Label><Input><Fit w={214}>Khonkaen Distribution ce</Fit></Input></Field>
              </Fields>
              <Fields $top={20}>
                <Field $w={791}>
                  <Label><Fit w={90}>สังกัดองค์กร</Fit><Star>*</Star></Label>
                  <Input $focus><Fit w={196}>บริษัท ทีดี ตะวันแดง จำกัด</Fit><MdArrowDropDown size={25} color="#0a6cf0" /></Input>
                </Field>
              </Fields>
              <Fields $top={19}>
                <Field $w={791}>
                  <Label><Fit w={202}>รายละเอียดศูนย์กระจายสินค้า</Fit></Label>
                  <Input $tall><Hint><Fit w={243}>ระบุ รายละเอียดศูนย์กระจายสินค้า</Fit></Hint></Input>
                </Field>
              </Fields>
              <Divider />
              <Section $top={18}><Fit w={88}>ข้อมูลที่อยู่</Fit></Section>
              <Fields $top={19}>
                <Field $w={377}>
                  <Label><Fit w={31}>ที่อยู่</Fit></Label>
                  <Input><Hint><Fit w={60}>ระบุที่อยู่</Fit></Hint></Input>
                </Field>
                <MapView>
                  <ZoomBox>
                    <ZoomKey><svg width="16" height="16" viewBox="0 0 16 16"><path d="M8 0v16M0 8h16" stroke="#1673f0" strokeWidth="3" /></svg></ZoomKey>
                    <ZoomKey><svg width="16" height="4" viewBox="0 0 16 4"><path d="M0 2h16" stroke="#1673f0" strokeWidth="3" /></svg></ZoomKey>
                  </ZoomBox>
                  <Marker />
                </MapView>
              </Fields>
            </Form>
            <ModalScroll><ModalThumb /></ModalScroll>
          </ModalBody>
          <ModalFoot>
            <Button $bg="#e9f8f7" $fg="#fff" $w={125} $h={42}><MdCheck size={15} /><Fit w={41}>บันทึก</Fit></Button>
            <Button $bg="#f3f3f3" $fg="#222" $w={125} $h={42}><Cross s={11} c="#333" w={1.400} /><Fit w={46}>ยกเลิก</Fit></Button>
          </ModalFoot>
        </Modal>
        <Share>
          <ShareInfo>
            <svg width="14" height="14" viewBox="0 0 14 14"><path d="M6 0l5 5H8.500c0 4 1 6 4.500 8-6 0-9-2-9-8H1z" fill="#0a5a1c" /></svg>
            <ShareText><Fit w={158}>You are screen sharing</Fit></ShareText>
            <svg width="14" height="15" viewBox="0 0 14 15"><path d="M7 0l6 2v5c0 4-3 6-6 8-3-2-6-4-6-8V2z" fill="#15591f" /><path d="M4 7l2.500 2.500L10 5" stroke="#24db5c" strokeWidth="1.600" fill="none" /></svg>
          </ShareInfo>
          <StopShare><i /><Fit w={74}>Stop Share</Fit></StopShare>
        </Share>
      </Window>
      <Taskbar>
        {apps.map((a, i) => (
          <TaskApp key={i} $w={i === 0 ? 46 : 46} $open={a.open} $active={a.active}>
            <svg width="24" height="24" viewBox="0 0 24 24">{a.art}</svg>
          </TaskApp>
        ))}
        <Tray>
          <TrayItem $w={30}><svg width="16" height="9" viewBox="0 0 16 9"><path d="M0 8.500 8 .8l8 7.700" fill="none" stroke="#fff" strokeWidth="1.300" /></svg></TrayItem>
          <TrayItem $w={29}><svg width="20" height="20" viewBox="0 0 20 20"><path d="M1 19C2 9 9 2 19 0c-1 8-5 14-14 15z" fill="#a56cd0" /><path d="M1 19C5 11 10 6 19 0" stroke="#eadcf8" fill="none" /></svg></TrayItem>
          <TrayItem $w={31}><svg width="18" height="20" viewBox="0 0 18 20"><path d="M3 5h8v10H3zM11 8l4-2v8l-4-2M3 2q4-2 8 0M3 18q4 2 8 0" fill="none" stroke="#fff" strokeWidth="1.300" /></svg></TrayItem>
          <TrayItem $w={30}><svg width="20" height="14" viewBox="0 0 20 14"><path d="M5 3h13v9H5zM18 5.500h1.500v4H18M2 0v3M5 0v3M1 3h5v3H1zM3 6v4" fill="none" stroke="#fff" /><path d="M7 5h8v5H7z" fill="#fff" /></svg></TrayItem>
          <TrayItem $w={30}><svg width="21" height="17" viewBox="0 0 21 17"><path d="M5 2h15v10H5M1 1h4v4H1zM3 5v11M12 12v4M8 16h8" fill="none" stroke="#fff" strokeWidth="1.200" /></svg></TrayItem>
          <TrayItem $w={30}><svg width="21" height="17" viewBox="0 0 21 17"><path d="M1 6h3l4-4v13l-4-4H1zM10.500 6.500q1.500 2 0 4" fill="none" stroke="#fff" strokeWidth="1.200" /><path d="M13.500 4.500q3 4 0 8M16.500 2.500q4 6 0 12" fill="none" stroke="#777" strokeWidth="1.200" /></svg></TrayItem>
          <TrayItem $w={46}><Fit w={29}>ENG</Fit></TrayItem>
          <TrayItem $w={76}><Fit w={52}>2:58 PM</Fit></TrayItem>
          <TrayItem $w={54}><svg width="21" height="21" viewBox="0 0 21 21"><path d="M12 17l-3-1H1V1h19v11" fill="none" stroke="#fff" strokeWidth="1.300" /><path d="M17 11q5 7-4 8 6 3 7-4 0-2-3-4z" fill="#fff" /></svg></TrayItem>
        </Tray>
      </Taskbar>
    </Desktop>
  );
}
